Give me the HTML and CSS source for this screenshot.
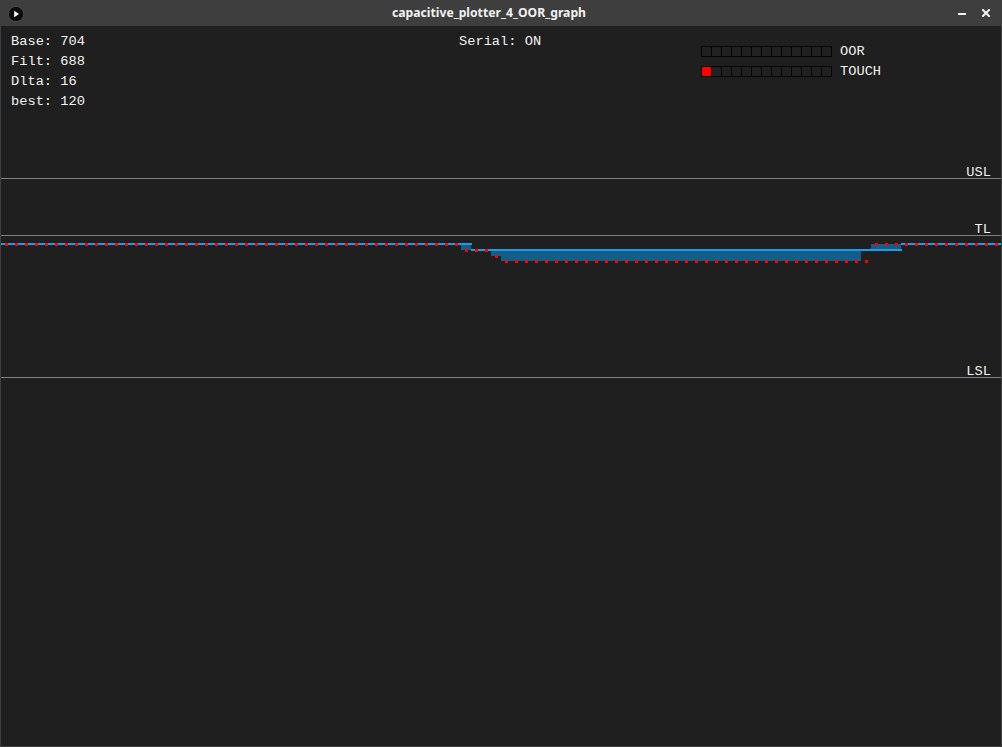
FILE: index.html
```html
<!DOCTYPE html>
<html>
<head>
<meta charset="utf-8">
<title>capacitive_plotter_4_OOR_graph</title>
<link rel="stylesheet" href="styles.css">
</head>
<body>
<div class="window">
  <div class="titlebar">
    <div class="tb-left">
      <svg class="app-icon" width="16" height="16" viewBox="0 0 16 16">
        <circle cx="8" cy="8" r="7.6" fill="#0c0c0c" stroke="#5a5a5a" stroke-width="0.6"/>
        <path d="M6.2 4.8 L11 8 L6.2 11.2 Z" fill="#ffffff"/>
      </svg>
    </div>
    <div class="tb-title">capacitive_plotter_4_OOR_graph</div>
    <div class="tb-buttons">
      <svg class="btn-min" width="8" height="8" viewBox="0 0 8 8"><rect x="0" y="3" width="8" height="2" fill="#f2f2f2"/></svg>
      <svg class="btn-close" width="8" height="8" viewBox="0 0 8 8"><path d="M0.8 0.8 L7.2 7.2 M7.2 0.8 L0.8 7.2" stroke="#f2f2f2" stroke-width="2" stroke-linecap="square"/></svg>
    </div>
  </div>
  <div class="content">
    <div class="header">
      <div class="stats">
        <div class="line">Base: 704</div>
        <div class="line">Filt: 688</div>
        <div class="line">Dlta: 16</div>
        <div class="line">best: 120</div>
      </div>
      <div class="serial">
        <div class="line">Serial: ON</div>
      </div>
      <div class="indicators">
        <div class="ind-row">
          <div class="cells">
            <span class="cell"></span><span class="cell"></span><span class="cell"></span><span class="cell"></span><span class="cell"></span><span class="cell"></span><span class="cell"></span><span class="cell"></span><span class="cell"></span><span class="cell"></span><span class="cell"></span><span class="cell"></span><span class="cell"></span>
          </div>
          <span class="ind-label">OOR</span>
        </div>
        <div class="ind-row">
          <div class="cells">
            <span class="cell on"></span><span class="cell"></span><span class="cell"></span><span class="cell"></span><span class="cell"></span><span class="cell"></span><span class="cell"></span><span class="cell"></span><span class="cell"></span><span class="cell"></span><span class="cell"></span><span class="cell"></span><span class="cell"></span>
          </div>
          <span class="ind-label">TOUCH</span>
        </div>
      </div>
    </div>
    <svg class="plot" width="1000" height="600" viewBox="0 0 1000 600">
      <!-- limit lines -->
      <rect class="limit" x="0" y="32" width="1000" height="1"/>
      <rect class="limit" x="0" y="89" width="1000" height="1"/>
      <rect class="limit" x="0" y="231" width="1000" height="1"/>
      <text class="lim-label" x="990" y="30" text-anchor="end">USL</text>
      <text class="lim-label" x="990" y="87" text-anchor="end">TL</text>
      <text class="lim-label" x="990" y="229" text-anchor="end">LSL</text>
      <!-- difference fills -->
      <rect class="fill" x="460" y="99" width="10" height="5"/>
      <rect class="fill" x="490" y="105" width="10" height="5"/>
      <rect class="fill" x="500" y="105" width="360" height="10"/>
      <rect class="fill" x="870" y="98" width="30" height="5"/>
      <!-- filtered line -->
      <rect class="trace" x="0" y="97" width="471" height="2"/>
      <rect class="trace" x="470" y="103" width="431" height="2"/>
      <rect class="trace" x="900" y="97" width="100" height="2"/>
      <!-- raw samples -->
      <line class="dots" x1="4" y1="98.5" x2="460" y2="98.5"/>
      <line class="dots" x1="464" y1="104.5" x2="490" y2="104.5"/>
      <line class="dots" x1="494" y1="110.5" x2="500" y2="110.5"/>
      <line class="dots" x1="504" y1="115.5" x2="870" y2="115.5"/>
      <line class="dots" x1="874" y1="98.5" x2="1000" y2="98.5"/>
    </svg>
  </div>
</div>
</body>
</html>
```
FILE: styles.css
```css
html, body {
  margin: 0;
  padding: 0;
  background: #1f1f1f;
}

.window {
  width: 1002px;
  height: 747px;
  display: flex;
  flex-direction: column;
}

.titlebar {
  height: 26px;
  background: #3e3e3e;
  display: flex;
  align-items: center;
  flex: none;
}

.tb-left {
  width: 32px;
  display: flex;
  align-items: center;
}

.app-icon {
  display: block;
  margin-left: 8px;
  margin-top: 1px;
}

.tb-title {
  flex: 1;
  text-align: center;
  color: #f2f2f2;
  font-family: "Noto Sans", "Open Sans", sans-serif;
  font-weight: bold;
  font-size: 12.2px;
  line-height: 26px;
}

.tb-buttons {
  width: 56px;
  box-sizing: border-box;
  padding: 0 12px;
  display: flex;
  align-items: center;
  gap: 16px;
}

.btn-min, .btn-close {
  display: block;
}

.btn-min {
  margin-top: 1px;
}

.content {
  flex: 1;
  box-sizing: border-box;
  background: #1f1f1f;
  border-left: 1px solid #404040;
  border-right: 1px solid #404040;
  border-bottom: 1px solid #404040;
  display: flex;
  flex-direction: column;
  font-family: "Liberation Mono", monospace;
  font-size: 13.7px;
  color: #f2f2f2;
}

.header {
  height: 120px;
  box-sizing: border-box;
  padding: 6px 0 0 10px;
  display: grid;
  grid-template-columns: 448px 242px 1fr;
  align-items: start;
}

.line {
  line-height: 20px;
  white-space: pre;
}

.indicators {
  margin-top: 10px;
}

.ind-row {
  display: flex;
  align-items: flex-start;
  height: 20px;
}

.cells {
  display: flex;
  margin-top: 4px;
}

.cell {
  display: block;
  width: 11px;
  height: 11px;
  box-sizing: border-box;
  border: 1px solid #050505;
  background: #212121;
  margin-right: -1px;
}

.cell:last-child {
  margin-right: 0;
}

.cell.on {
  background: #ff0000;
}

.ind-label {
  margin-left: 8px;
  line-height: 20px;
}

.plot {
  display: block;
  flex: none;
}

.limit {
  fill: #808080;
}

.lim-label {
  fill: #f2f2f2;
  font-family: "Liberation Mono", monospace;
  font-size: 13.7px;
}

.fill {
  fill: #135e88;
}

.trace {
  fill: #1c9be6;
}

.dots {
  stroke: #ff0000;
  stroke-width: 3;
  stroke-dasharray: 3 7;
}
```
